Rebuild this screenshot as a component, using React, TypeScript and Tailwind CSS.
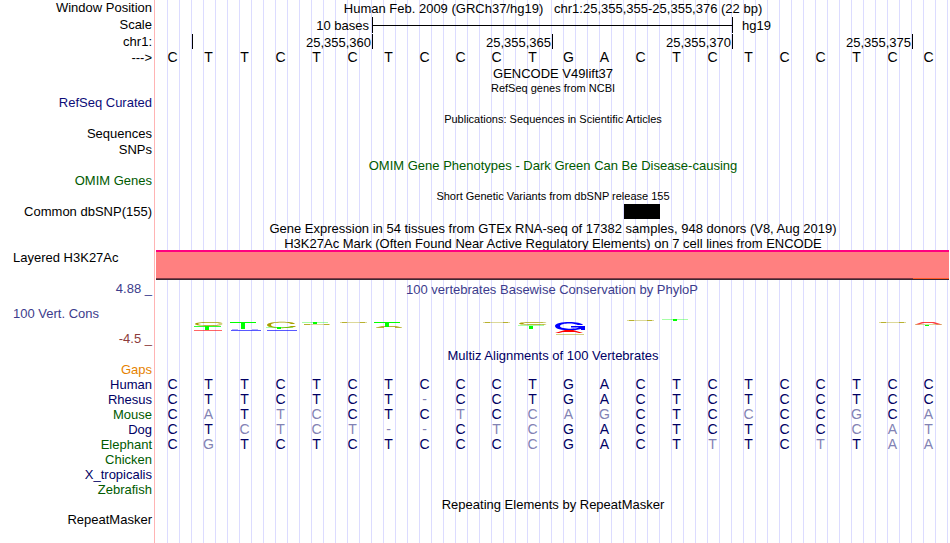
import type { ReactNode } from 'react';

const COLS = 'grid grid-cols-[repeat(22,minmax(0,1fr))] mr-[2px]';

type Tone = 'black' | 'navy' | 'blue' | 'green' | 'violet' | 'orange';

const tones: Record<Tone, string> = {
  black: 'text-black',
  navy: 'text-[#000064]',
  blue: 'text-[#0c0c78]',
  green: 'text-[#005a00]',
  violet: 'text-[#3c3c8c]',
  orange: 'text-[#e68200]',
};

// upper case = same base as human, lower case = mismatch
const human = 'CTTCTCTCCCTGACTCTCCTCC';

const species: { name: string; tone: Tone; bases: string }[] = [
  { name: 'Human', tone: 'navy', bases: human },
  { name: 'Rhesus', tone: 'navy', bases: 'CTTCTCT-CCTGACTCTCCTCC' },
  { name: 'Mouse', tone: 'green', bases: 'CaTtcCTCtCcagCTCcCCgCa' },
  { name: 'Dog', tone: 'navy', bases: 'CTctct--CtcGACTCTCCcat' },
  { name: 'Elephant', tone: 'green', bases: 'CgTCTCTCCCcGACTtTCtTaa' },
  { name: 'Chicken', tone: 'green', bases: '' },
  { name: 'X_tropicalis', tone: 'navy', bases: '' },
  { name: 'Zebrafish', tone: 'green', bases: '' },
];

interface RowProps {
  height: string;
  label?: string;
  tone?: Tone;
  children?: ReactNode;
}

function Row({ height, label, tone = 'black', children }: RowProps) {
  return (
    <div className={`flex ${height}`}>
      <div className={`w-[154px] shrink-0 pr-[2px] text-right ${tones[tone]}`}>{label}</div>
      <div className="ml-[2px] min-w-0 flex-1">{children}</div>
    </div>
  );
}

function Title({ children, tone = 'black', small = false }: { children: ReactNode; tone?: Tone; small?: boolean }) {
  return (
    <div className={`flex h-full items-center justify-center whitespace-pre ${tones[tone]} ${small ? 'text-[11px]' : ''}`}>
      {children}
    </div>
  );
}

function Bases({ bases, colored = false }: { bases: string; colored?: boolean }) {
  return (
    <div className={`${COLS} h-full items-center text-center text-[14px]`}>
      {bases.split('').map((base, i) => {
        const match = base === base.toUpperCase() && base !== '-';
        const color = !colored ? 'text-black' : match ? 'text-[#000064]' : 'text-[#8282b4]';
        return (
          <span key={i} className={`pr-[3px] ${color}`}>
            {base.toUpperCase()}
          </span>
        );
      })}
    </div>
  );
}

function ScaleBar() {
  return (
    <div className={`${COLS} h-[16px]`}>
      <div className="col-span-6 flex items-center justify-end pr-[3px]">10 bases</div>
      <div className="col-span-10 flex items-center border-l border-black">
        <div className="h-px flex-1 bg-black" />
      </div>
      <div className="col-span-6 flex items-center border-l border-black pl-[9px]">hg19</div>
    </div>
  );
}

function Ruler() {
  const marks = ['25,355,360', '25,355,365', '25,355,370', '25,355,375'];
  return (
    <div className={`${COLS} h-[15px]`}>
      <div />
      {marks.map((mark) => (
        <div key={mark} className="col-span-5 flex items-end justify-end border-l border-black pr-px leading-[13px]">
          {mark}
        </div>
      ))}
      <div className="border-l border-black" />
    </div>
  );
}

// Stretched letter stacks of the conservation score, one base every 36 units
function ConservationLogo() {
  return (
    <svg viewBox="0 0 792 20" className="block w-full" aria-hidden="true">
      {/* C */}
      <g fill="#a8a000" fillRule="evenodd">
        <path d="M39 5C39 2.500 66 2.500 66.500 4.500H63C60 3.500 42 3.500 42 5C42 6.500 60 6.500 63 5.500H66.500C66 7.500 39 7.500 39 5z" />
        <path d="M111 6C111 2 138 2 139 5H135C132 3 115 3 115 6C115 9 132 9 135 7H140C138 10 111 10 111 6z" />
        <path d="M363 4.500C363 2.500 389 2.500 390.500 4H387C382 3.500 367 3.500 367 4.500C367 5.500 382 5.500 387 5H390.500C389 6.500 363 6.500 363 4.500z" />
        <path d="M220 8.500L226 7H240L246 8.500V9H239V8H228V9H220z" opacity=".8" />
        <path d="M148 5h26v1h-26zM184 3h27v1h-27zM327 3h27v1h-27zM471 1h27v1h-27zM723 3h27v1h-27z" opacity=".4" />
        <path d="M148 5h6v1h-6zM168 5h5v1h-5zM186 3h5v1h-5zM204 3h5v1h-5zM329 3h5v1h-5zM347 3h5v1h-5zM473 1h5v1h-5zM491 1h5v1h-5zM725 3h5v1h-5zM743 3h5v1h-5z" opacity=".7" />
        <path d="M400 15h28v1h-28z" opacity=".5" />
        <path d="M759 5h27v1h-27z" opacity=".4" />
      </g>
      {/* T */}
      <g fill="#00ff00">
        <path d="M49 7h4v4h-4zM74 3h26v1H89v6h-4V4H74zM121 8h4v2h-4zM157 3h4v2h-4zM218 3h26v1h-11v4h-4V4h-11zM373 7h4v3h-4zM517 0h4v2h-4zM769 6h4v1h-4z" />
        <path d="M38 7h27v1H38z" opacity=".8" />
        <path d="M110 8h27v1h-27zM146 3h26v1h-26zM362 6h26v1h-26zM506 0h26v1h-26z" opacity=".35" />
      </g>
      {/* G */}
      <g fill="#0000ff">
        <path d="M427 6H422C418 3.500 404 4 404 7C404 10 419 10.500 423 8.500H415V7H429V11H425V10C418 12 399 12 399 7C399 2 425 2 427 6z" />
        <path d="M75 11h30v1H75zM111 11h30v1h-30z" opacity=".65" />
        <path d="M76 10h6v1h-6zM96 10h6v1h-6z" opacity=".3" />
      </g>
      {/* A */}
      <g fill="#ff0000">
        <path d="M399 14L409 11H417L427 14H423L419 13H407L403 14z" />
        <path d="M38 11h28v1H38z" opacity=".6" />
        <path d="M759 5.500L766 3H778L786 5.500H781L776 4H768L763 5.500z" opacity=".75" />
      </g>
    </svg>
  );
}

export default function App() {
  return (
    <div
      className="flex min-h-screen bg-white text-[13px] leading-[15px] text-black"
      style={{ fontFamily: '"Liberation Sans", Arial, sans-serif' }}
    >
      <main className="grid flex-1">
        {/* guide lines, three per base */}
        <div className="col-start-1 row-start-1 ml-[154px] flex border-l border-[#ffb4b4] pl-px">
          <div className="flex-1 bg-[linear-gradient(to_right,transparent_calc(100%-1px),#dcdcff_calc(100%-1px))] bg-[length:calc((100%-2px)/66)_100%]" />
        </div>

        <div className="z-10 col-start-1 row-start-1">
          <Row height="h-[17px]" label="Window Position">
            <Title>{'Human Feb. 2009 (GRCh37/hg19)   chr1:25,355,355-25,355,376 (22 bp)'}</Title>
          </Row>
          <Row height="h-[17px]" label="Scale">
            <ScaleBar />
          </Row>
          <Row height="h-[16px]" label="chr1:">
            <Ruler />
          </Row>
          <Row height="h-[15px]" label="--->">
            <Bases bases={human} />
          </Row>
          <Row height="h-[17px]">
            <Title>GENCODE V49lift37</Title>
          </Row>
          <Row height="h-[13px]">
            <Title small>RefSeq genes from NCBI</Title>
          </Row>
          <Row height="h-[17px]" label="RefSeq Curated" tone="blue" />
          <Row height="h-[14px]">
            <Title small>Publications: Sequences in Scientific Articles</Title>
          </Row>
          <Row height="h-[16px]" label="Sequences" />
          <Row height="h-[16px]" label="SNPs" />
          <Row height="h-[15px]">
            <Title tone="green">OMIM Gene Phenotypes - Dark Green Can Be Disease-causing</Title>
          </Row>
          <Row height="h-[15px]" label="OMIM Genes" tone="green" />
          <Row height="h-[16px]">
            <Title small>Short Genetic Variants from dbSNP release 155</Title>
          </Row>
          <Row height="h-[16px]" label="Common dbSNP(155)">
            <div className={COLS}>
              <div className="col-start-14 h-[15px] bg-black" />
            </div>
          </Row>
          <Row height="h-[16px]">
            <Title>Gene Expression in 54 tissues from GTEx RNA-seq of 17382 samples, 948 donors (V8, Aug 2019)</Title>
          </Row>
          <Row height="h-[14px]">
            <Title>H3K27Ac Mark (Often Found Near Active Regulatory Elements) on 7 cell lines from ENCODE</Title>
          </Row>

          <div className="flex h-[30px]">
            <div className="w-[156px] shrink-0 pl-[13px]">Layered H3K27Ac</div>
            <div className="mr-px flex flex-1 flex-col border-t-2 border-b border-t-[#ff0080] border-b-[#3c2832] bg-[#ff8080]">
              <div className="mt-auto flex h-px bg-[#823c46]">
                <div className="ml-auto w-[36px] bg-[#ff5a28]" />
              </div>
            </div>
          </div>

          <div className="flex h-[68px]">
            <div className="flex w-[156px] shrink-0 flex-col justify-between pt-px pb-[2px] text-[#3c3c8c]">
              <div className="pr-[4px] text-right">4.88 _</div>
              <div className="pl-[13px]">100 Vert. Cons</div>
              <div className="pr-[4px] text-right text-[#8c3c3c]">-4.5 _</div>
            </div>
            <div className="mr-[2px] flex-1">
              <div className="h-[39px] pt-[2px] text-center text-[#3c3c8c]">
                100 vertebrates Basewise Conservation by PhyloP
              </div>
              <ConservationLogo />
            </div>
          </div>

          <Row height="h-[14px]">
            <Title tone="navy">Multiz Alignments of 100 Vertebrates</Title>
          </Row>
          <Row height="h-[15px]" label="Gaps" tone="orange" />
          {species.map((s) => (
            <Row key={s.name} height="h-[15px]" label={s.name} tone={s.tone}>
              <Bases bases={s.bases} colored />
            </Row>
          ))}
          <Row height="h-[15px]">
            <Title>Repeating Elements by RepeatMasker</Title>
          </Row>
          <Row height="h-[15px]" label="RepeatMasker" />
        </div>
      </main>
    </div>
  );
}
